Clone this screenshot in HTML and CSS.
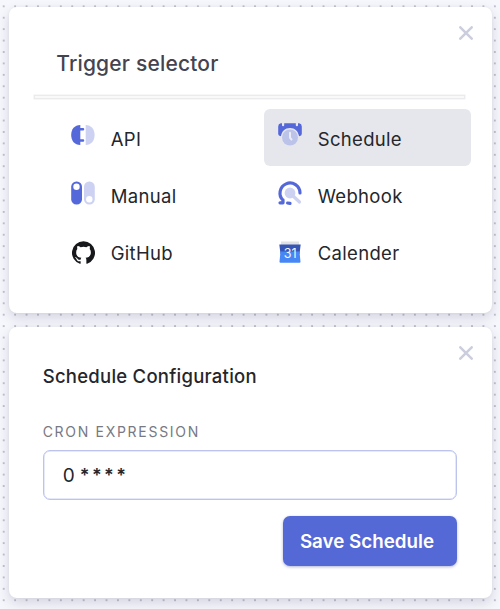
FILE: index.html
```html
<!DOCTYPE html>
<html lang="en">
<head>
<meta charset="utf-8">
<title>Trigger selector</title>
<link rel="stylesheet" href="styles.css">
</head>
<body>
<main class="canvas">
  <section class="card selector">
    <button class="close" aria-label="Close"><svg viewBox="0 0 14 14"><path d="M1.3 1.3 12.7 12.7M12.7 1.3 1.3 12.7"/></svg></button>
    <h1 class="title"><span>Trigger selector</span></h1>
    <div class="divider"></div>
    <div class="options">
      <div class="option">
        <svg class="icon" viewBox="0 0 24 24"><path class="primary" d="M9.300 2C3.500 2 .2 6.200 .2 12S3.500 22 9.300 22Z"/><path class="joint" d="M8.500 6.200H12M8.500 17.500H12"/><path class="pale" d="M14.700 2C20.200 2 23.600 6.200 23.600 12S20.200 22 14.700 22Z"/></svg>
        <span class="label">API</span>
      </div>
      <div class="option selected">
        <svg class="icon schedule" viewBox="0 0 24 24"><path class="primary" d="M.2 12V4.500Q.2 1.800 2.800 1.300H4v2q0 1 1.100 1t1.100-1v-2h11.600v2q0 1 1.100 1t1.100-1v-2h1.200q2.600.5 2.600 3.200V12q0 2-2.700 2.300C20 9 17 6 12 6S4 9 2.900 14.300Q.2 14 .2 12Z"/><circle class="clock" cx="12" cy="15.500" r="8"/><path class="hand" d="M12 10.800v4.900l1.500 1.800"/></svg>
        <span class="label">Schedule</span>
      </div>
      <div class="option">
        <svg class="icon manual" viewBox="0 0 24 24"><rect class="primary" x=".2" y=".5" width="10.800" height="23" rx="5.200"/><circle class="white" cx="5.500" cy="5.800" r="3.200"/><rect class="pale" x="13" y=".5" width="10.800" height="23" rx="5.200"/><circle class="white" cx="18.300" cy="18.300" r="3.200"/></svg>
        <span class="label">Manual</span>
      </div>
      <div class="option">
        <svg class="icon manual" viewBox="0 0 24 24"><path class="magnifier" d="m14 14 7.500 7"/><circle class="pale" cx="12" cy="12" r="5.400"/><path class="ring" d="M22 12A10 10 0 1 0 5 19.200M2 21.800h3V18.800M9.600 22l2.400.400"/></svg>
        <span class="label">Webhook</span>
      </div>
      <div class="option">
        <svg class="icon github" viewBox="0 0 24 24"><path d="M12 .3a12 12 0 0 0-3.790 23.390c.6.110.820-.260.820-.580l-.010-2.040c-3.340.730-4.040-1.610-4.040-1.610-.550-1.390-1.330-1.760-1.330-1.760-1.090-.740.080-.730.080-.730 1.200.090 1.840 1.240 1.840 1.240 1.070 1.830 2.810 1.300 3.490 1 .110-.780.420-1.310.760-1.610-2.660-.300-5.470-1.330-5.470-5.930 0-1.310.470-2.380 1.240-3.220-.120-.300-.540-1.520.120-3.180 0 0 1.010-.320 3.300 1.230a11.500 11.500 0 0 1 6 0c2.290-1.550 3.300-1.230 3.300-1.230.660 1.660.240 2.880.120 3.180.770.840 1.240 1.910 1.240 3.220 0 4.610-2.810 5.620-5.490 5.920.430.370.820 1.100.820 2.220l-.010 3.290c0 .320.220.700.830.580A12 12 0 0 0 12 .3Z"/></svg>
        <span class="label">GitHub</span>
      </div>
      <div class="option">
        <svg class="icon calendar" viewBox="0 0 24 24"><path class="paper" d="M3 1.500h18V6H3Z"/><path class="cal-top" d="M1.300 4.500h21.400L21.500 14h-19Z"/><path class="cal-front" d="M2.500 11.500h19l1 10.500Q22.500 22.700 21.500 22.700h-19Q1.400 22.700 1.500 21.700Z"/><text class="day" x="12.100" y="18.300">31</text></svg>
        <span class="label">Calender</span>
      </div>
    </div>
  </section>

  <section class="card config">
    <button class="close" aria-label="Close"><svg viewBox="0 0 14 14"><path d="M1.300 1.300 12.700 12.700M12.700 1.300 1.300 12.700"/></svg></button>
    <h2 class="subtitle"><span>Schedule Configuration</span></h2>
    <div class="field-label">CRON EXPRESSION</div>
    <div class="field"><span class="zero">0</span><span class="stars">****</span></div>
    <button class="save"><span>Save Schedule</span></button>
  </section>
</main>
</body>
</html>
```
FILE: styles.css
```css
* { box-sizing: border-box; }

body {
  margin: 0;
  font-family: Inter, "Liberation Sans", sans-serif;
  color: #25262c;
}

.canvas {
  height: 609px;
  padding: 7px 8.500px 11px 8.700px;
  display: flex;
  flex-direction: column;
  gap: 14px;
  overflow: hidden;
  background-color: #f6f7fc;
  background-image: radial-gradient(circle, #b8bac7 0.600px, transparent 1.300px);
  background-size: 11.430px 11.430px;
  background-position: -2px 0.600px;
}

.card {
  position: relative;
  background: #fff;
  border-radius: 8px;
  box-shadow: 0 5px 12px rgba(50, 50, 90, 0.170), 0 0 3px rgba(50, 50, 90, 0.060);
}

.selector { height: 306px; padding: 34px 20px 0 25.500px; }
.config { height: 271px; padding: 34px 34.500px 0 34px; }

button { font: inherit; border: 0; padding: 0; }

.close {
  position: absolute;
  top: 19px;
  right: 19px;
  width: 14px;
  height: 14px;
  background: none;
}

.close svg { display: block; width: 14px; height: 14px; }
.close path { fill: none; stroke: #cbcedd; stroke-width: 2.500; stroke-linecap: round; }

.title {
  margin: 0 0 0 22px;
  height: 44px;
  line-height: 45px;
  font-size: 21px;
  font-weight: 500;
  letter-spacing: 0.180px;
  color: #444450;
}

.divider {
  width: 431px;
  height: 4px;
  margin: 10px 0;
  border: 1px solid #ebebed;
  background: #f9f9fa;
  box-shadow: 0 0 0 0.500px #f0f0f1;
}

.options {
  display: grid;
  grid-template-columns: 207px 207px;
  grid-auto-rows: 57px;
  margin-left: 22.500px;
}

.option {
  display: flex;
  align-items: center;
  gap: 16px;
  padding-left: 14px;
  border-radius: 6px;
}

.selected { background: #e6e7ec; }

.icon { width: 24px; height: 24px; margin-top: -5px; overflow: visible; }
.schedule { margin-top: -7px; }
.manual { margin-top: -4px; }
.calendar { margin-top: 0; }
.github { width: 23px; height: 23px; margin: 1px 0 0 1px; }
.label { font-size: 18.500px; line-height: 24px; margin-top: 3px; letter-spacing: 0.320px; }

.primary { fill: #5468d9; }
.pale { fill: #cdd2f3; }
.white { fill: #fff; }
.joint { stroke: #5468d9; stroke-width: 2.500; stroke-linecap: round; }
.clock { fill: #bcc3e9; }
.hand { fill: none; stroke: #eaecf7; stroke-width: 2; stroke-linecap: round; }
.magnifier { stroke: #cdd2f3; stroke-width: 3.200; stroke-linecap: round; }
.ring { fill: none; stroke: #5468d9; stroke-width: 3.200; stroke-linecap: round; stroke-linejoin: round; }
.github path { fill: #17181c; }
.paper { fill: #e1e1e1; }
.cal-top { fill: #3656b6; }
.cal-front { fill: #4686f5; }
.day { font-size: 12.500px; text-anchor: middle; fill: #f5f8ff; }

.subtitle {
  margin: 0;
  height: 30px;
  line-height: 31px;
  font-size: 18.500px;
  font-weight: 500;
  letter-spacing: 0.250px;
}

.field-label {
  margin-top: 32px;
  height: 18px;
  line-height: 18px;
  font-size: 14px;
  letter-spacing: 1.700px;
  color: #777984;
}

.field {
  height: 50px;
  margin-top: 9px;
  padding-left: 19px;
  display: flex;
  align-items: center;
  border: 1px solid #bcc4ee;
  box-shadow: inset 0 0 0 0.500px #cdd3f3;
  border-radius: 7px;
  font-size: 19px;
}

.stars { margin-left: 5px; font-size: 18px; font-weight: 600; letter-spacing: 2.500px; }

.save {
  display: block;
  width: 174px;
  height: 50px;
  margin: 16px 0 0 auto;
  padding-right: 6px;
  border-radius: 7px;
  background: #5468d6;
  box-shadow: 0 1px 3px rgba(60, 70, 140, 0.400);
  color: #fff;
  font-size: 18.800px;
  font-weight: 600;
}
```
